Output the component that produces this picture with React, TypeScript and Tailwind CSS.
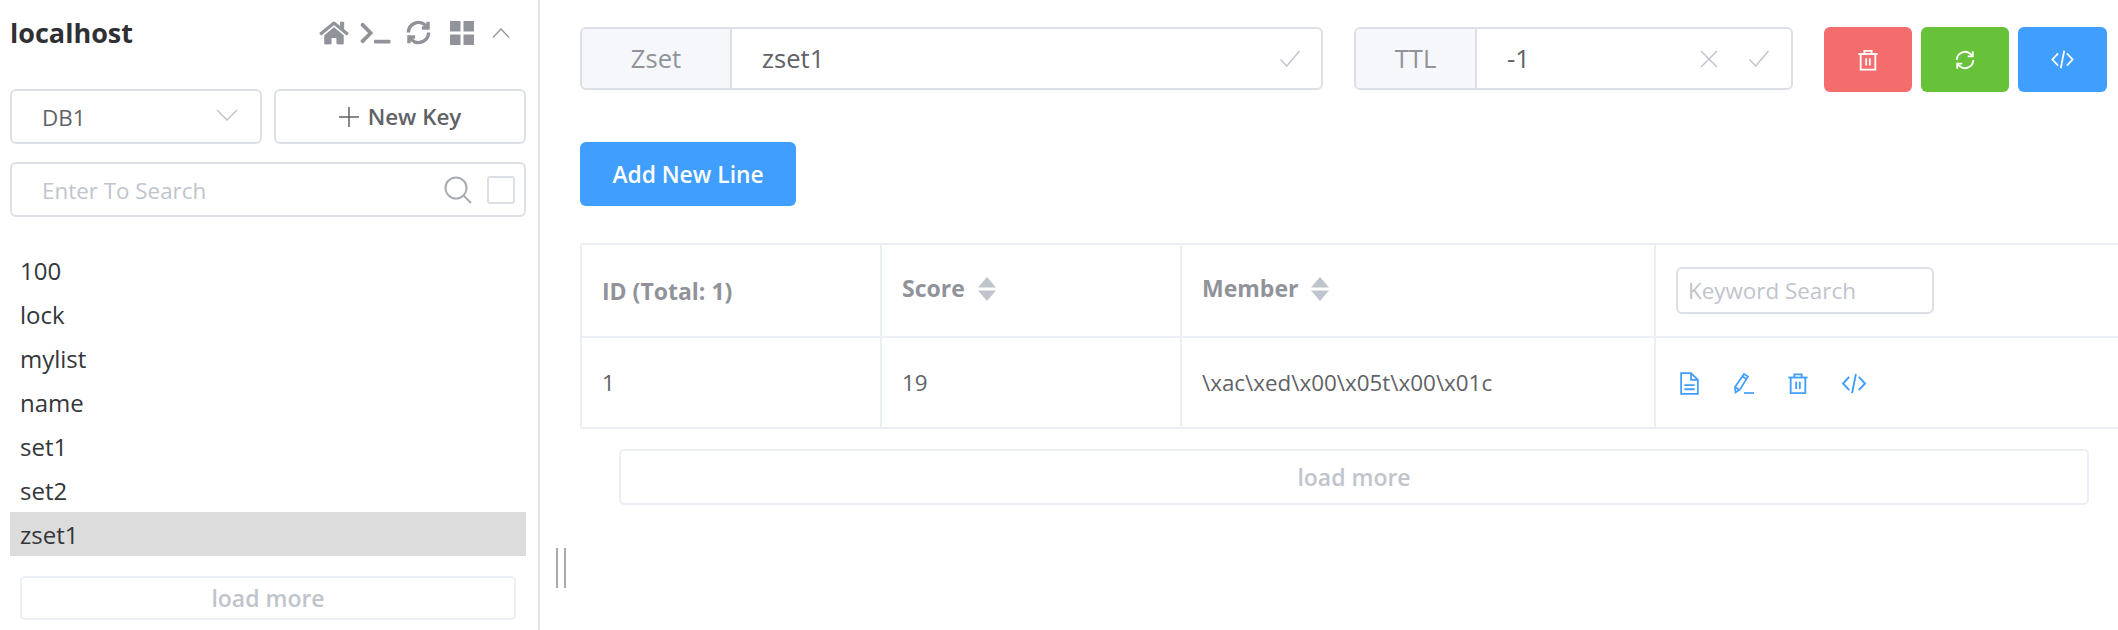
import { FaHome, FaTerminal } from 'react-icons/fa'

const KEYS = ['100', 'lock', 'mylist', 'name', 'set1', 'set2', 'zset1']

function RefreshIcon({ className }: { className?: string }) {
  return (
    <svg viewBox="0 0 24 24" fill="none" stroke="currentColor" className={className}>
      <path d="M3 12a9 9 0 0 1 15-6.6L20 7.5" />
      <path d="M20.5 2.5V8h-5.5" />
      <path d="M21 12a9 9 0 0 1-15 6.6L4 16.5" />
      <path d="M3.5 21.5V16H9" />
    </svg>
  )
}

function TrashIcon({ className }: { className?: string }) {
  return (
    <svg viewBox="0 0 24 24" fill="none" stroke="currentColor" strokeWidth="2" className={className}>
      <path d="M1.5 5.5h21" />
      <path d="M8 5V2h8v3" />
      <path d="M4 6v16.5h16V6" />
      <path d="M10 10v8M14 10v8" />
    </svg>
  )
}

function CodeIcon({ className }: { className?: string }) {
  return (
    <svg viewBox="0 0 26 24" fill="none" stroke="currentColor" strokeWidth="2" className={className}>
      <path d="M8 5l-6.5 7L8 19" />
      <path d="M18 5l6.5 7L18 19" />
      <path d="M15 2l-4 20" />
    </svg>
  )
}

function DocIcon({ className }: { className?: string }) {
  return (
    <svg viewBox="0 0 18 22" fill="none" stroke="currentColor" strokeWidth="1.7" className={className}>
      <path d="M1 1h9.5L17 7.5V21H1z" />
      <path d="M10.5 1v6.5H17" />
      <path d="M4 12.5h10M4 16.5h10" />
    </svg>
  )
}

function EditIcon({ className }: { className?: string }) {
  return (
    <svg viewBox="0 0 22 22" fill="none" stroke="currentColor" strokeWidth="1.7" className={className}>
      <path d="M11 1.5l4 2.5-8 13-4.5 3-.5-5.5z" />
      <path d="M9.5 4l4 2.5" />
      <path d="M2.5 15l4 2.5" />
      <path d="M11 20.5h10" />
    </svg>
  )
}

function CheckIcon({ className }: { className?: string }) {
  return (
    <svg viewBox="0 0 22 18" fill="none" stroke="currentColor" strokeWidth="1.5" className={className}>
      <path d="M1 10l6.5 7L21 1" />
    </svg>
  )
}

function GridIcon({ className }: { className?: string }) {
  return (
    <svg viewBox="0 0 24 24" fill="currentColor" className={className}>
      <rect x="0" y="0" width="10.5" height="10.5" />
      <rect x="13.5" y="0" width="10.5" height="10.5" />
      <rect x="0" y="13.5" width="10.5" height="10.5" />
      <rect x="13.5" y="13.5" width="10.5" height="10.5" />
    </svg>
  )
}

function SortCaret() {
  return (
    <svg viewBox="0 0 20 24" className="ml-[12px] h-[24px] w-[20px] fill-[#c0c4cc]">
      <path d="M10 0l9 10.5H1z" />
      <path d="M10 24l-9-10.5h18z" />
    </svg>
  )
}

export default function App() {
  return (
    <div className="relative flex h-[630px] w-[2118px] overflow-hidden bg-white font-['Open_Sans','Noto_Sans',sans-serif]">
      <aside className="h-full w-[540px] shrink-0 border-r-2 border-[#dfe1e8] pl-[10px] pr-[12px]">
        <div className="flex h-[65px] items-center justify-between">
          <span className="text-[27px] leading-none font-bold text-[#2f3033]">localhost</span>
          <div className="flex items-center pr-[16px] text-[#909399]">
            <FaHome className="h-[26px] w-[30px]" />
            <FaTerminal className="ml-[10px] h-[24px] w-[33px]" />
            <RefreshIcon className="ml-[13px] h-[27px] w-[27px] stroke-[3]" />
            <GridIcon className="ml-[18px] h-[24px] w-[24px]" />
            <svg viewBox="0 0 18 10" fill="none" stroke="currentColor" strokeWidth="1.2" className="ml-[18px] h-[10px] w-[18px]">
              <path d="M1 9.5L9 1l8 8.5" />
            </svg>
          </div>
        </div>

        <div className="mt-[24px] flex gap-[12px]">
          <div className="flex h-[55px] w-[252px] items-center justify-between rounded-[6px] border-2 border-[#dcdfe6] pl-[30px] pr-[22px] text-[22.4px] text-[#606266]">
            <span className="pt-[2px]">DB1</span>
            <svg viewBox="0 0 22 12" fill="none" stroke="#c0c4cc" strokeWidth="1.5" className="mb-[4px] h-[12px] w-[22px]">
              <path d="M1 1l10 10L21 1" />
            </svg>
          </div>
          <button className="flex h-[55px] w-[252px] items-center justify-center rounded-[6px] border-2 border-[#dcdfe6] text-[22.4px] font-semibold text-[#606266]">
            <svg viewBox="0 0 20 20" fill="none" stroke="currentColor" strokeWidth="1.5" className="mr-[9px] h-[20px] w-[20px]">
              <path d="M10 0v20M0 10h20" />
            </svg>
            <span className="pt-[1px]">New Key</span>
          </button>
        </div>

        <div className="mt-[18px] flex h-[55px] items-center rounded-[6px] border-2 border-[#dcdfe6] pl-[30px] pr-[9px]">
          <span className="flex-1 pt-[2px] text-[22.4px] text-[#c0c4cc]">Enter To Search</span>
          <svg viewBox="0 0 28 28" fill="none" stroke="#a9acb2" strokeWidth="2" className="mr-[17px] h-[28px] w-[28px] translate-x-[2px]">
            <circle cx="12" cy="12" r="10.5" />
            <path d="M19.5 19.5L27 27" />
          </svg>
          <span className="h-[28px] w-[28px] rounded-[3px] border-2 border-[#dcdfe6]" />
        </div>

        <ul className="mt-[31px]">
          {KEYS.map((name) => (
            <li
              key={name}
              className={`flex h-[44px] items-center pl-[10px] pt-[1px] text-[24px] text-[#33363a] ${name === 'zset1' ? 'bg-[#dcdcdc]' : ''}`}
            >
              {name}
            </li>
          ))}
        </ul>

        <div className="mx-[10px] mt-[20px] flex h-[44px] items-center justify-center rounded-[5px] border-2 border-[#ebeef5] pt-[1px] text-[23px] font-semibold text-[#c0c4cc]">
          load more
        </div>
      </aside>

      <span className="absolute left-[556px] top-[548px] h-[40px] w-[10px] border-x-2 border-[#a9a9a9]" />

      <main className="min-w-0 flex-1 pl-[40px] pt-[27px]">
        <div className="flex items-start">
          <div className="flex h-[63px] w-[743px] rounded-[6px] border-2 border-[#dcdfe6]">
            <div className="flex w-[150px] items-center justify-center rounded-l-[4px] border-r-2 border-[#dcdfe6] bg-[#f5f7fa] pt-[2px] text-[25.6px] text-[#909399]">
              Zset
            </div>
            <div className="flex flex-1 items-center justify-between pl-[30px] pr-[20px] text-[25.6px] text-[#606266]">
              <span className="pt-[2px]">zset1</span>
              <CheckIcon className="h-[17px] w-[22px] text-[#c0c4cc]" />
            </div>
          </div>

          <div className="ml-[31px] flex h-[63px] w-[439px] rounded-[6px] border-2 border-[#dcdfe6]">
            <div className="flex w-[121px] items-center justify-center rounded-l-[4px] border-r-2 border-[#dcdfe6] bg-[#f5f7fa] pt-[2px] text-[25.6px] text-[#909399]">
              TTL
            </div>
            <div className="flex flex-1 items-center pl-[30px] pr-[21px] text-[25.6px] text-[#606266]">
              <span className="flex-1 pt-[2px]">-1</span>
              <svg viewBox="0 0 18 18" fill="none" stroke="#c0c4cc" strokeWidth="1.5" className="mr-[30px] h-[18px] w-[18px]">
                <path d="M1 1l16 16M17 1L1 17" />
              </svg>
              <CheckIcon className="h-[17px] w-[22px] text-[#c0c4cc]" />
            </div>
          </div>

          <div className="ml-[31px] flex gap-[9px]">
            <button className="flex h-[65px] w-[88px] items-center justify-center rounded-[6px] bg-[#f56c6c] text-white">
              <TrashIcon className="h-[22px] w-[22px]" />
            </button>
            <button className="flex h-[65px] w-[88px] items-center justify-center rounded-[6px] bg-[#67c23a] text-white">
              <RefreshIcon className="h-[22px] w-[22px] stroke-2" />
            </button>
            <button className="flex h-[65px] w-[89px] items-center justify-center rounded-[6px] bg-[#409eff] text-white">
              <CodeIcon className="h-[21px] w-[25px]" />
            </button>
          </div>
        </div>

        <button className="mt-[50px] block h-[64px] w-[216px] rounded-[6px] bg-[#409eff] pt-[3px] text-[22.8px] font-semibold text-white">
          Add New Line
        </button>

        <div className="mt-[37px] border-2 border-r-0 border-[#ebeef5]">
          <div className="grid h-[93px] grid-cols-[298px_300px_474px_1fr] border-b-2 border-[#ebeef5] text-[23px] font-bold text-[#909399]">
            <div className="flex items-center pl-[20px] pt-[2px]">ID (Total: 1)</div>
            <div className="flex items-center border-l-2 border-[#ebeef5] pb-[4px] pl-[20px]">
              Score
              <SortCaret />
            </div>
            <div className="flex items-center border-l-2 border-[#ebeef5] pb-[4px] pl-[20px]">
              Member
              <SortCaret />
            </div>
            <div className="flex items-center border-l-2 border-[#ebeef5] pl-[20px]">
              <div className="flex h-[47px] w-[258px] items-center rounded-[6px] border-2 border-[#dcdfe6] pl-[10px] pt-[1px] text-[22.4px] font-normal text-[#c0c4cc]">
                Keyword Search
              </div>
            </div>
          </div>
          <div className="grid h-[89px] grid-cols-[298px_300px_474px_1fr] text-[22.4px] text-[#606266]">
            <div className="flex items-center pl-[20px]">1</div>
            <div className="flex items-center border-l-2 border-[#ebeef5] pl-[20px]">19</div>
            <div className="flex items-center border-l-2 border-[#ebeef5] pl-[20px]">\xac\xed\x00\x05t\x00\x01c</div>
            <div className="flex items-center border-l-2 border-[#ebeef5] pl-[24px] pt-[2px] text-[#409eff]">
              <DocIcon className="h-[23px] w-[19px]" />
              <EditIcon className="ml-[34px] h-[23px] w-[22px]" />
              <TrashIcon className="ml-[32px] h-[23px] w-[22px]" />
              <CodeIcon className="ml-[32px] h-[23px] w-[26px]" />
            </div>
          </div>
        </div>

        <div className="ml-[39px] mt-[20px] flex h-[56px] w-[1470px] items-center justify-center rounded-[5px] border-2 border-[#ebeef5] pt-[1px] text-[23px] font-semibold text-[#c0c4cc]">
          load more
        </div>
      </main>
    </div>
  )
}
